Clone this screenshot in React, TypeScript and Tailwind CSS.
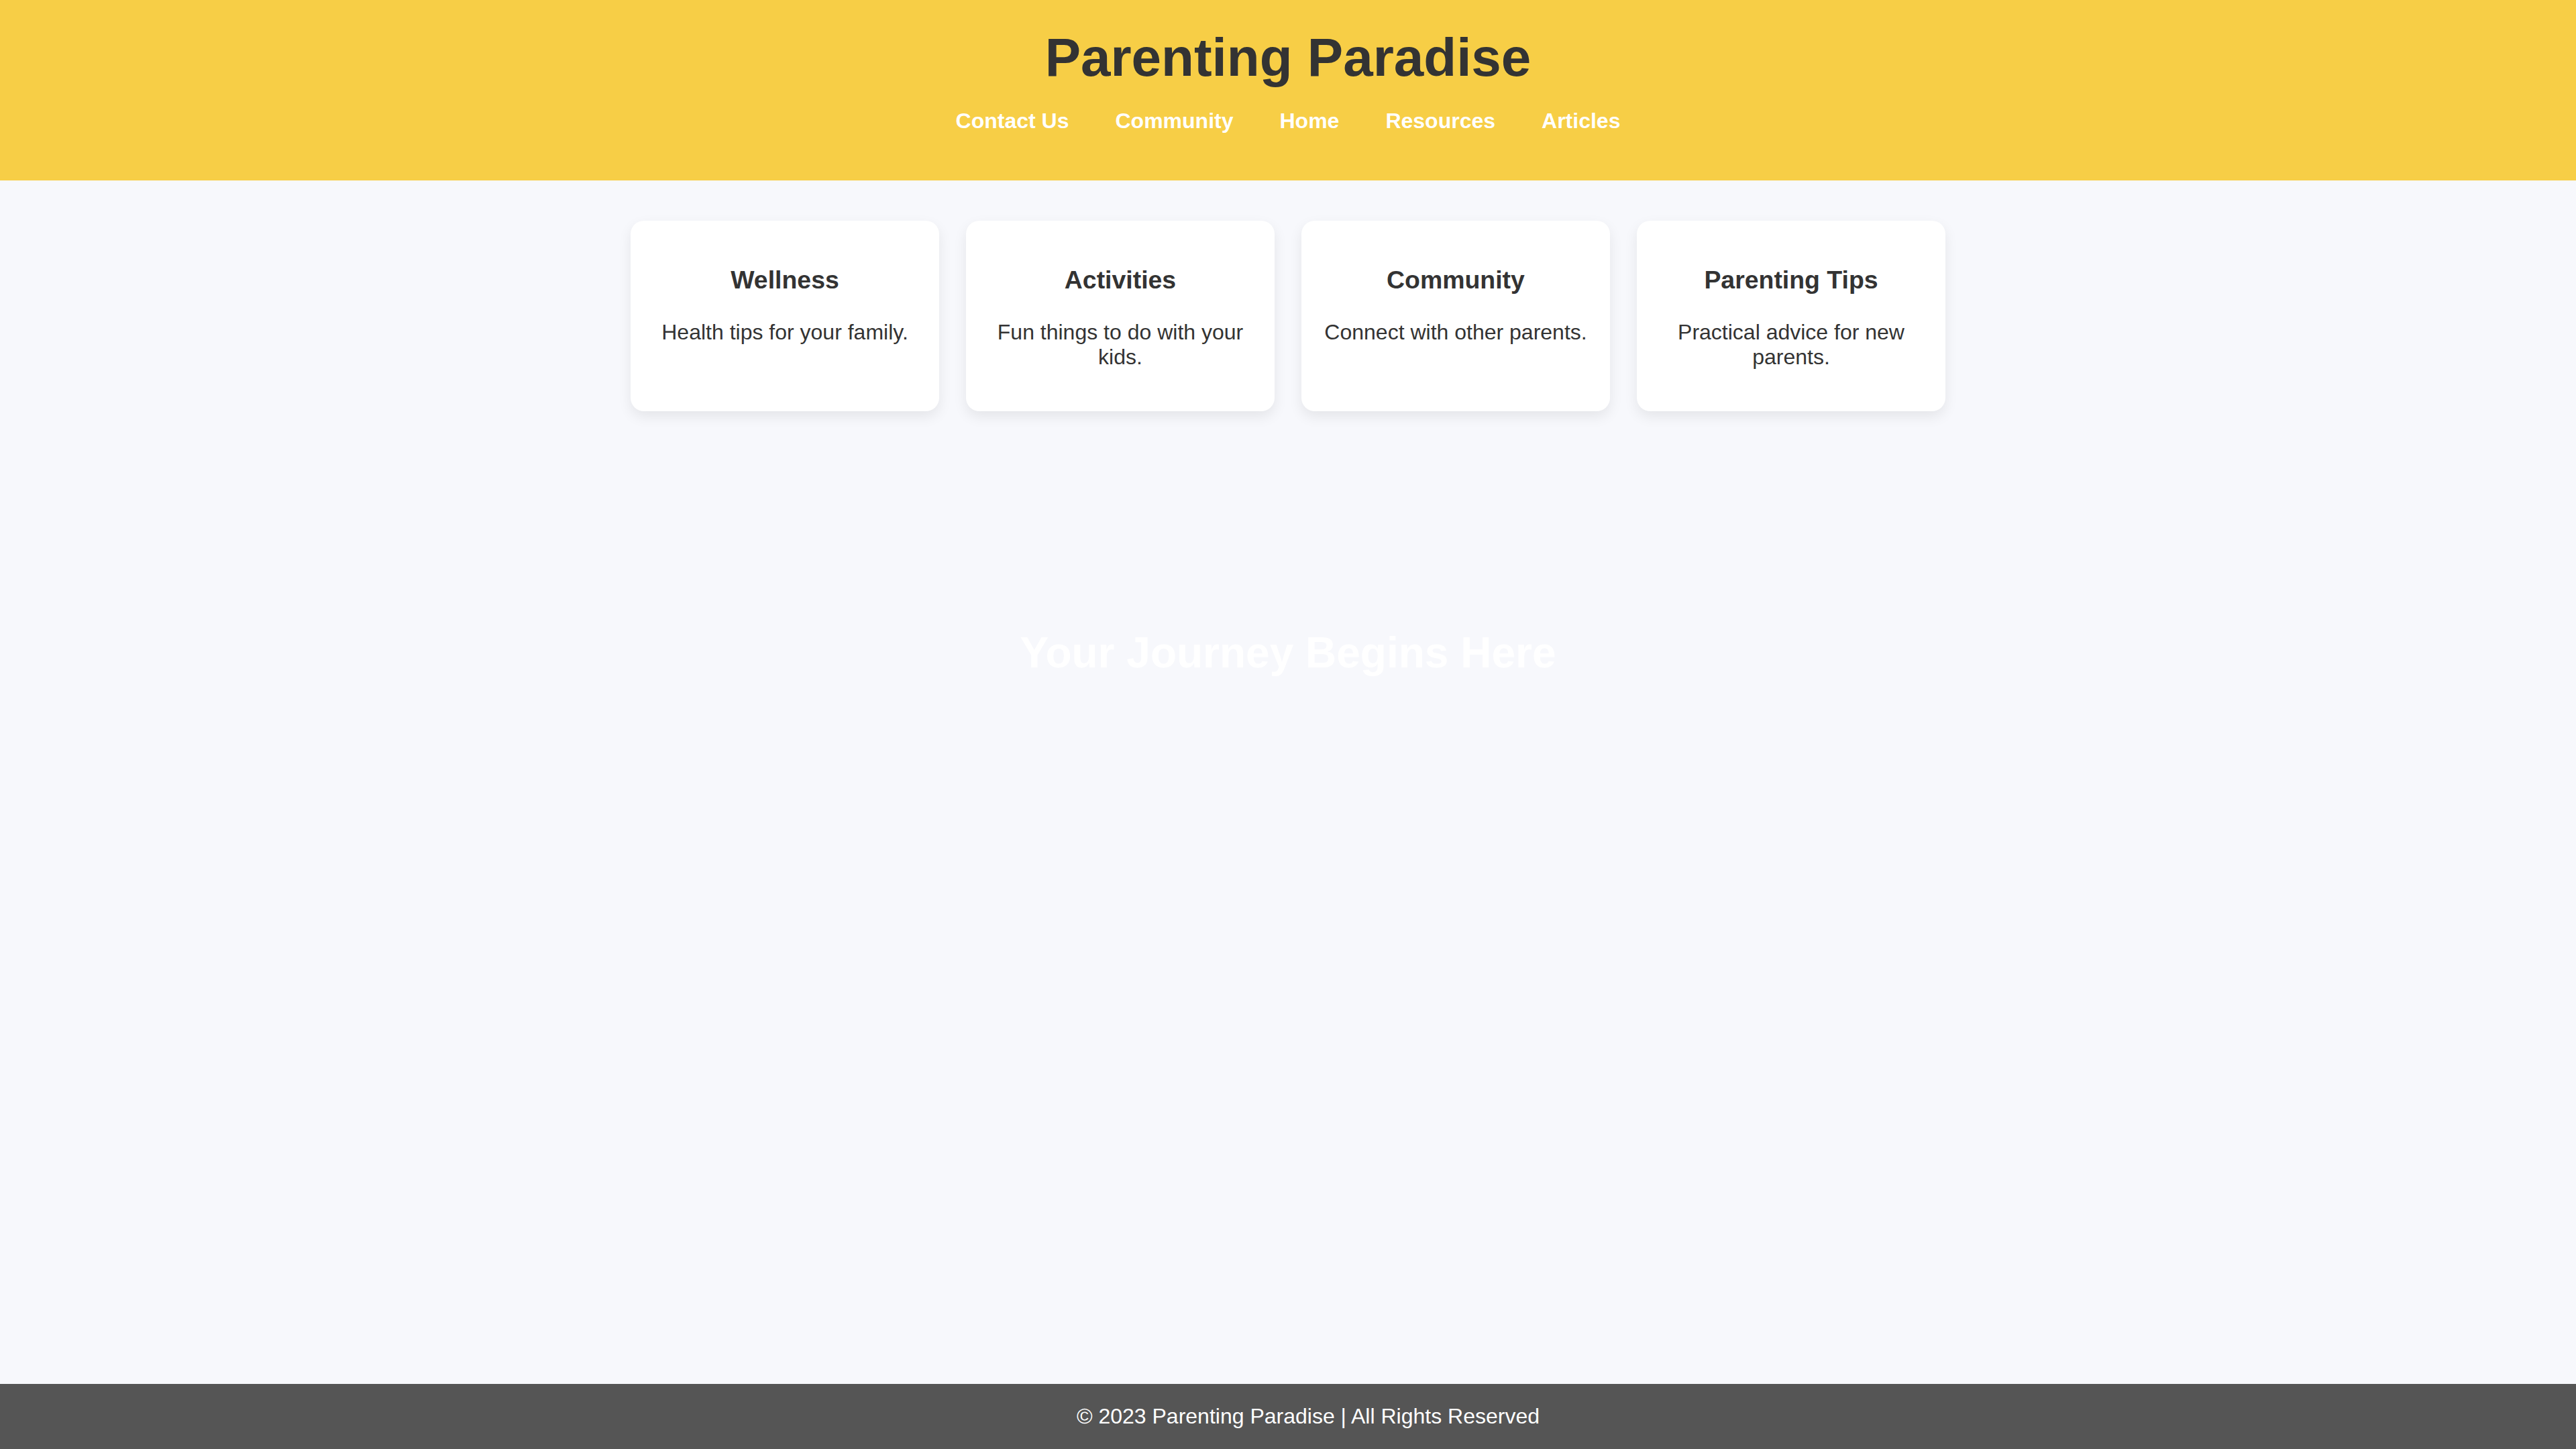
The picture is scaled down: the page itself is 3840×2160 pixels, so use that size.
import React from "react";

const cards = [
  { title: "Wellness", text: "Health tips for your family." },
  { title: "Activities", text: "Fun things to do with your kids." },
  { title: "Community", text: "Connect with other parents." },
  { title: "Parenting Tips", text: "Practical advice for new parents." },
];

const links = ["Contact Us", "Community", "Home", "Resources", "Articles"];

export default function App() {
  return (
    <div className="min-h-screen flex flex-col overflow-hidden bg-[#f7f8fc] font-['Liberation_Sans',Arial,sans-serif] text-[#333]">
      <header className="bg-[#f7ce46] py-[40px] text-center">
        <h1 className="m-0 text-[80px] font-bold leading-[normal] text-[#333]">Parenting Paradise</h1>
        <nav className="flex justify-center gap-[69px]">
          {links.map((l) => (
            <a key={l} href="#" className="py-[30px] text-[32px] font-bold leading-[normal] text-white no-underline">
              {l}
            </a>
          ))}
        </nav>
      </header>
      <main className="flex-1">
        <section className="pt-[60px] mx-auto w-[1960px] grid grid-cols-4 gap-[40px]">
          {cards.map((c) => (
            <div key={c.title} className="bg-white rounded-[20px] p-[30px] text-center shadow-[0_8px_20px_rgba(0,0,0,0.08)]">
              <h3 className="mt-[37.44px] mb-[37.44px] text-[37.44px] font-bold leading-[normal] text-[#333]">{c.title}</h3>
              <p className="mb-[32px] text-[32px] leading-[normal] text-[#333]">{c.text}</p>
            </div>
          ))}
        </section>
        <section className="mt-[40px] h-[640px] flex items-center justify-center">
          <h2 className="text-[64px] font-bold leading-[normal] text-white">Your Journey Begins Here</h2>
        </section>
      </main>
      <footer className="bg-[#555555] py-[30px] pl-[60px] text-center text-white text-[32px] leading-[normal]">
        © 2023 Parenting Paradise | All Rights Reserved
      </footer>
    </div>
  );
}
